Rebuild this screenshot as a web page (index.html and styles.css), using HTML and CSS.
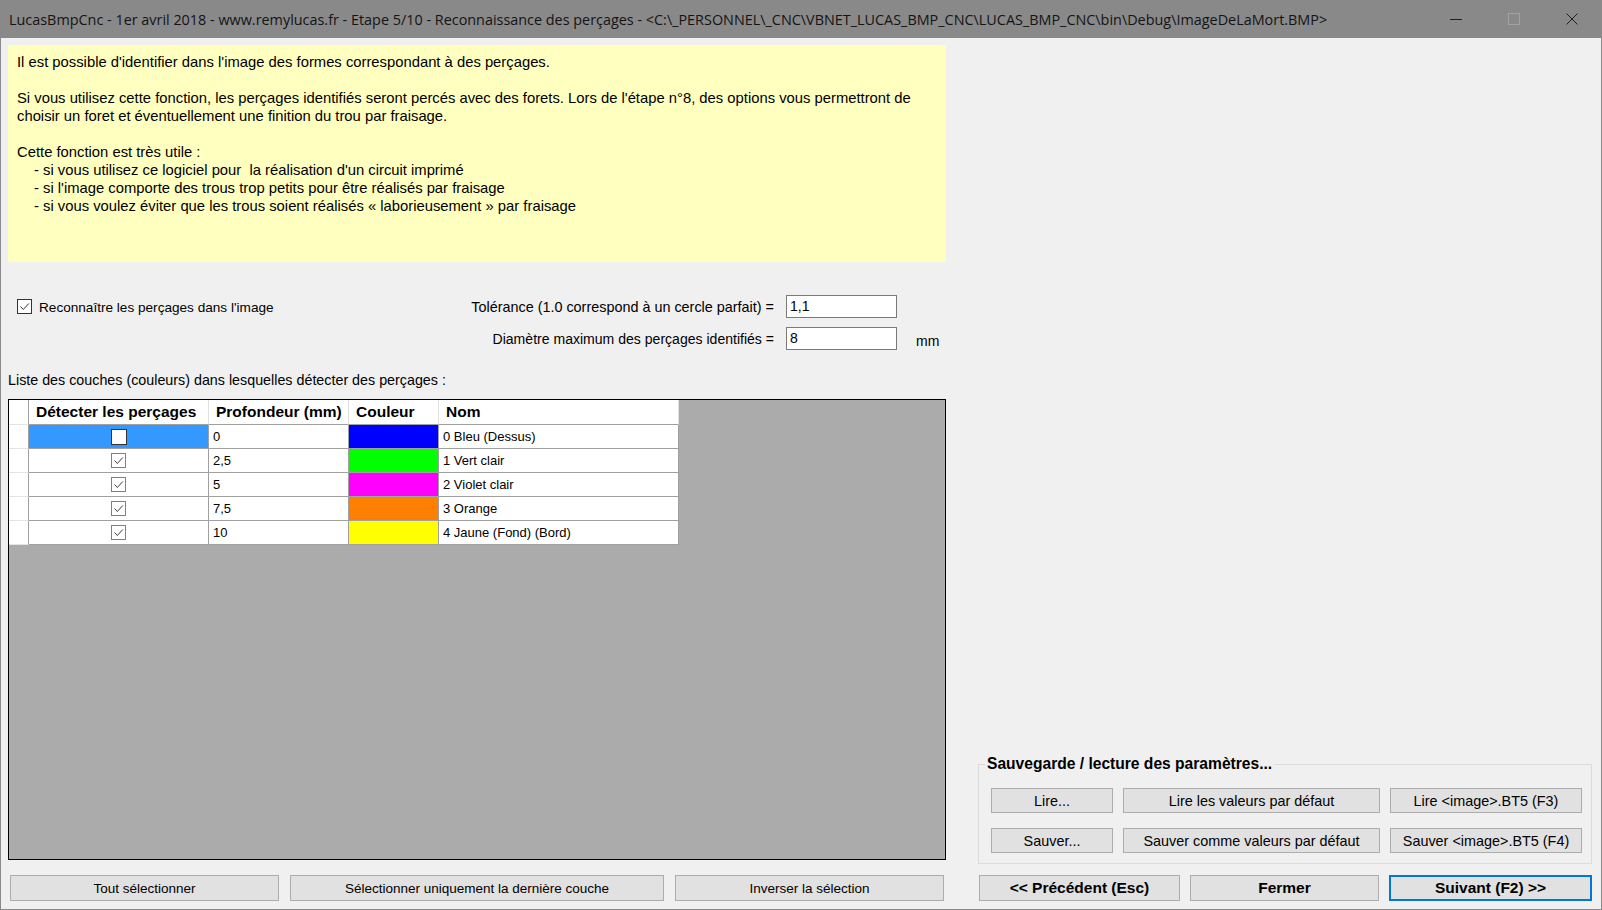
FILE: index.html
```html
<!DOCTYPE html>
<html lang="fr">
<head>
<meta charset="utf-8">
<title>LucasBmpCnc</title>
<link rel="stylesheet" href="styles.css">
</head>
<body>
<div class="window">
  <header class="titlebar">
    <div class="title">LucasBmpCnc - 1er avril 2018 - www.remylucas.fr - Etape 5/10 - Reconnaissance des perçages - &lt;C:\_PERSONNEL\_CNC\VBNET_LUCAS_BMP_CNC\LUCAS_BMP_CNC\bin\Debug\ImageDeLaMort.BMP&gt;</div>
    <div class="controls">
      <span class="ctl"><svg width="12" height="12" viewBox="0 0 12 12"><path d="M0 6.5H12" stroke="#1f1f1f" stroke-width="1"/></svg></span>
      <span class="ctl"><svg width="12" height="12" viewBox="0 0 12 12"><rect x="0.5" y="0.5" width="11" height="11" fill="none" stroke="#a2a2a2"/></svg></span>
      <span class="ctl"><svg width="12" height="12" viewBox="0 0 12 12"><path d="M0.5 0.5L11.5 11.5M11.5 0.5L0.5 11.5" stroke="#1f1f1f" stroke-width="1"/></svg></span>
    </div>
  </header>

  <div class="client">
    <section class="left">
      <div class="info">
        <p>Il est possible d'identifier dans l'image des formes correspondant à des perçages.</p>
        <p>Si vous utilisez cette fonction, les perçages identifiés seront percés avec des forets. Lors de l'étape n°8, des options vous permettront de<br>choisir un foret et éventuellement une finition du trou par fraisage.</p>
        <p class="tight">Cette fonction est très utile :</p>
        <ul class="uses">
          <li>- si vous utilisez ce logiciel pour &nbsp;la réalisation d'un circuit imprimé</li>
          <li>- si l'image comporte des trous trop petits pour être réalisés par fraisage</li>
          <li>- si vous voulez éviter que les trous soient réalisés « laborieusement » par fraisage</li>
        </ul>
      </div>

      <div class="options">
        <label class="check">
          <svg class="cb" width="15" height="15" viewBox="0 0 15 15"><rect x="0.5" y="0.5" width="14" height="14" fill="#fff" stroke="#333"/><path d="M3.5 7.5l2.8 3 5.5-6" fill="none" stroke="#333" stroke-width="1"/></svg>
          <span>Reconnaître les perçages dans l'image</span>
        </label>
        <span class="flabel">Tolérance (1.0 correspond à un cercle parfait) =</span>
        <span class="input">1,1</span>
        <span></span>
        <span></span>
        <span class="flabel narrow">Diamètre maximum des perçages identifiés =</span>
        <span class="input">8</span>
        <span class="unit">mm</span>
      </div>

      <div class="list-label">Liste des couches (couleurs) dans lesquelles détecter des perçages :</div>

      <div class="dgv">
        <div class="dgv-row head">
          <div class="rh"></div>
          <div class="hc">Détecter les perçages</div>
          <div class="hc">Profondeur (mm)</div>
          <div class="hc">Couleur</div>
          <div class="hc">Nom</div>
        </div>
        <div class="dgv-row">
          <div class="rh"></div>
          <div class="dc center selected"><svg width="16" height="16" viewBox="0 0 16 16"><rect x="0.5" y="0.5" width="15" height="15" fill="#fff" stroke="#333"/></svg></div>
          <div class="dc">0</div>
          <div class="dc swatch blue"></div>
          <div class="dc">0 Bleu (Dessus)</div>
        </div>
        <div class="dgv-row">
          <div class="rh"></div>
          <div class="dc center"><svg width="15" height="15" viewBox="0 0 15 15"><rect x="0.5" y="0.5" width="14" height="14" fill="#fff" stroke="#808080"/><path d="M3.5 7.5l2.8 3 5.5-6" fill="none" stroke="#3a3a3a" stroke-width="1"/></svg></div>
          <div class="dc">2,5</div>
          <div class="dc swatch green"></div>
          <div class="dc">1 Vert clair</div>
        </div>
        <div class="dgv-row">
          <div class="rh"></div>
          <div class="dc center"><svg width="15" height="15" viewBox="0 0 15 15"><rect x="0.5" y="0.5" width="14" height="14" fill="#fff" stroke="#808080"/><path d="M3.5 7.5l2.8 3 5.5-6" fill="none" stroke="#3a3a3a" stroke-width="1"/></svg></div>
          <div class="dc">5</div>
          <div class="dc swatch magenta"></div>
          <div class="dc">2 Violet clair</div>
        </div>
        <div class="dgv-row">
          <div class="rh"></div>
          <div class="dc center"><svg width="15" height="15" viewBox="0 0 15 15"><rect x="0.5" y="0.5" width="14" height="14" fill="#fff" stroke="#808080"/><path d="M3.5 7.5l2.8 3 5.5-6" fill="none" stroke="#3a3a3a" stroke-width="1"/></svg></div>
          <div class="dc">7,5</div>
          <div class="dc swatch orange"></div>
          <div class="dc">3 Orange</div>
        </div>
        <div class="dgv-row">
          <div class="rh"></div>
          <div class="dc center"><svg width="15" height="15" viewBox="0 0 15 15"><rect x="0.5" y="0.5" width="14" height="14" fill="#fff" stroke="#808080"/><path d="M3.5 7.5l2.8 3 5.5-6" fill="none" stroke="#3a3a3a" stroke-width="1"/></svg></div>
          <div class="dc">10</div>
          <div class="dc swatch yellow"></div>
          <div class="dc">4 Jaune (Fond) (Bord)</div>
        </div>
      </div>

      <div class="sel-buttons">
        <button class="btn small">Tout sélectionner</button>
        <button class="btn small">Sélectionner uniquement la dernière couche</button>
        <button class="btn small">Inverser la sélection</button>
      </div>
    </section>

    <section class="right">
      <fieldset class="group">
        <legend>Sauvegarde / lecture des paramètres...</legend>
        <div class="group-grid">
          <button class="btn">Lire...</button>
          <button class="btn">Lire les valeurs par défaut</button>
          <button class="btn">Lire &lt;image&gt;.BT5 (F3)</button>
          <button class="btn">Sauver...</button>
          <button class="btn">Sauver comme valeurs par défaut</button>
          <button class="btn">Sauver &lt;image&gt;.BT5 (F4)</button>
        </div>
      </fieldset>
      <div class="nav">
        <button class="btn bold">&lt;&lt; Précédent (Esc)</button>
        <button class="btn bold">Fermer</button>
        <button class="btn bold default">Suivant (F2) &gt;&gt;</button>
      </div>
    </section>
  </div>
</div>
</body>
</html>
```

FILE: styles.css
```css
* { box-sizing: border-box; }

html, body {
  margin: 0;
  padding: 0;
}

body {
  width: 1602px;
  height: 910px;
  overflow: hidden;
  background: #f0f0f0;
  font-family: "Liberation Sans", Arial, sans-serif;
  color: #000;
}

.window {
  width: 1602px;
  height: 910px;
  border: 1px solid #8a8a8a;
  border-top: none;
  display: flex;
  flex-direction: column;
  background: #f0f0f0;
}

.titlebar {
  flex: none;
  height: 38px;
  background: #898989;
  display: flex;
  align-items: center;
}

.title {
  flex: 1;
  padding-left: 8px;
  font-family: "Open Sans", "Noto Sans", sans-serif;
  font-size: 14.4px;
  color: #141414;
  white-space: nowrap;
  overflow: hidden;
}

.controls {
  display: flex;
  height: 100%;
}

.ctl {
  width: 58px;
  display: flex;
  align-items: center;
  justify-content: center;
}

.client {
  flex: 1;
  display: flex;
  min-height: 0;
}

/* ---------- left column ---------- */
.left {
  width: 945px;
  flex: none;
  padding: 7px 0 8px 7px;
  display: flex;
  flex-direction: column;
}

.info {
  height: 217px;
  background: #ffffc0;
  padding: 8px 0 0 9px;
  font-size: 14.8px;
  line-height: 18px;
  white-space: nowrap;
}

.info p {
  margin: 0 0 18px 0;
}

.info p.tight {
  margin: 0;
}

.uses {
  list-style: none;
  margin: 0;
  padding: 0 0 0 17px;
}

.options {
  margin-top: 33px;
  display: grid;
  grid-template-columns: auto 1fr 111px 49px;
  grid-template-rows: 23px 23px;
  row-gap: 9px;
  align-items: center;
  font-size: 14.4px;
}

.check {
  display: flex;
  align-items: center;
  gap: 7px;
  padding-left: 9px;
  font-size: 13.6px;
}

.check span {
  padding-top: 1px;
}

.cb { display: block; }

.flabel {
  text-align: right;
  padding-right: 12px;
}

.flabel.narrow {
  font-size: 14.05px;
}

.input {
  height: 23px;
  background: #fff;
  border: 1px solid #7a7a7a;
  padding: 2px 0 0 3px;
  font-size: 14px;
}

.unit {
  padding-left: 19px;
  font-size: 14px;
  align-self: end;
  padding-bottom: 1px;
}

.list-label {
  margin-top: 21px;
  font-size: 14.3px;
  line-height: 18px;
}

/* ---------- data grid ---------- */
.dgv {
  flex: 1;
  margin-top: 10px;
  border: 1px solid #000;
  background: #ababab;
}

.dgv-row {
  display: grid;
  grid-template-columns: 20px 180px 140px 90px 240px;
  width: 670px;
  height: 24px;
}

.dgv-row.head {
  height: 25px;
}

.rh {
  background: #fff;
  border-right: 1px solid #a0a0a0;
  border-bottom: 1px solid #e4e4e4;
}

.hc {
  background: #fff;
  border-right: 1px solid #e0e0e0;
  border-bottom: 1px solid #a0a0a0;
  font-weight: bold;
  font-size: 15.5px;
  padding-left: 7px;
  display: flex;
  align-items: center;
  white-space: nowrap;
}

.dc {
  background: #fff;
  border-right: 1px solid #a0a0a0;
  border-bottom: 1px solid #a0a0a0;
  font-size: 13px;
  padding-left: 4px;
  display: flex;
  align-items: center;
  white-space: nowrap;
}

.dc.center {
  justify-content: center;
  padding-left: 0;
}

.dc.selected { background: #3399ff; }
.swatch.blue { background: #0000ff; }
.swatch.green { background: #00ff00; }
.swatch.magenta { background: #ff00ff; }
.swatch.orange { background: #ff8000; }
.swatch.yellow { background: #ffff00; }

/* ---------- buttons ---------- */
.btn {
  margin: 0;
  padding: 0;
  background: #e1e1e1;
  border: 1px solid #adadad;
  font-family: "Liberation Sans", Arial, sans-serif;
  font-size: 14.4px;
  color: #000;
  white-space: nowrap;
}

.btn.small { font-size: 13.5px; }

.btn.bold {
  font-weight: bold;
  font-size: 15.5px;
}

.btn.default {
  border: 2px solid #0078d7;
}

.sel-buttons {
  margin-top: 15px;
  height: 26px;
  display: grid;
  grid-template-columns: 269px 374px 269px;
  column-gap: 11px;
  padding-left: 2px;
}

/* ---------- right column ---------- */
.right {
  flex: 1;
  padding: 0 9px 8px 32px;
  display: flex;
  flex-direction: column;
  justify-content: flex-end;
}

.group {
  margin: 0;
  padding: 0 9px 10px 12px;
  border: 1px solid #dcdcdc;
  min-width: 0;
}

.group legend {
  font-weight: bold;
  font-size: 15.6px;
  line-height: 18px;
  padding: 0 2px;
  margin-left: -6px;
}

.group-grid {
  margin-top: 15px;
  display: grid;
  grid-template-columns: 122px 257px 1fr;
  grid-template-rows: 25px 25px;
  column-gap: 10px;
  row-gap: 15px;
}

.nav {
  margin-top: 11px;
  margin-left: 1px;
  height: 26px;
  display: grid;
  grid-template-columns: 201px 189px 1fr;
  column-gap: 10px;
}
```
